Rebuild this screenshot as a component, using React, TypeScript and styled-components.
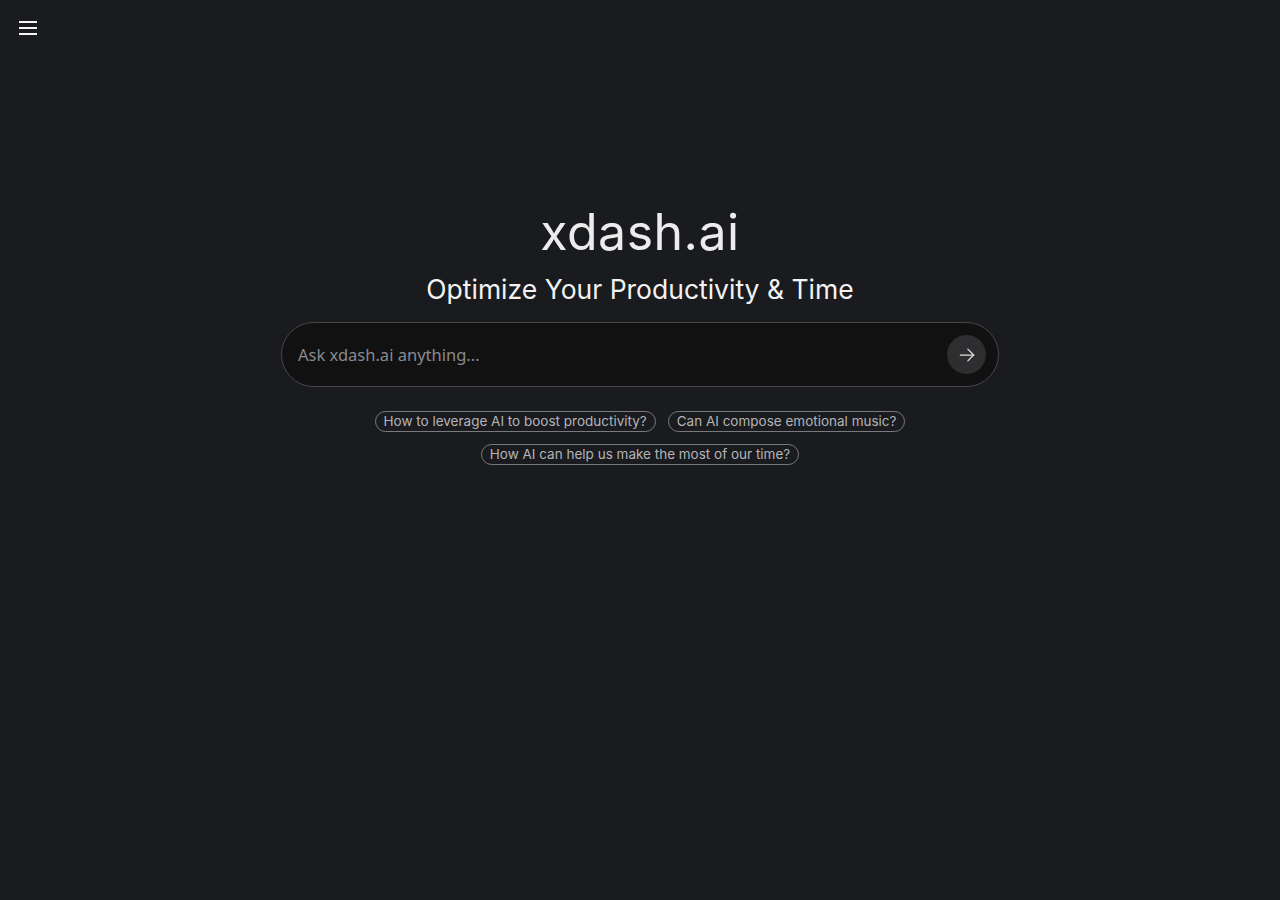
import { useState } from 'react';
import styled, { createGlobalStyle } from 'styled-components';

const GlobalStyle = createGlobalStyle`
  html, body {
    margin: 0;
    padding: 0;
    background: #1a1b1e;
  }
  body {
    font-family: Inter, "Noto Sans", sans-serif;
    color: #ececec;
  }
`;

const Page = styled.div`
  min-height: 900px;
  display: flex;
  flex-direction: column;
`;

const TopBar = styled.header`
  height: 56px;
  display: flex;
  align-items: center;
  padding-left: 16px;
`;

const MenuButton = styled.button`
  width: 24px;
  height: 24px;
  padding: 0;
  border: none;
  background: transparent;
  display: flex;
  align-items: center;
  justify-content: center;
  cursor: pointer;
`;

const Main = styled.main`
  display: flex;
  flex-direction: column;
  align-items: center;
  padding-top: 144px;
`;

const Title = styled.h1`
  margin: 0;
  font-size: 50px;
  font-weight: 400;
  line-height: 64px;
  color: #ececec;
  letter-spacing: 0.5px;
`;

const Subtitle = styled.h2`
  margin: 8px 0 0;
  font-size: 26.5px;
  font-weight: 400;
  line-height: 34px;
  color: #f2f2f2;
`;

const SearchForm = styled.form`
  margin-top: 16px;
  width: 718px;
  height: 65px;
  box-sizing: border-box;
  display: flex;
  align-items: center;
  padding: 0 12px 0 16px;
  background: #111112;
  border: 1px solid #47474b;
  border-radius: 33px;
`;

const SearchInput = styled.input`
  flex: 1;
  background: transparent;
  border: none;
  outline: none;
  padding: 0;
  color: #e6e6e6;
  font-family: "Noto Sans", sans-serif;
  font-size: 16.5px;

  &::placeholder {
    color: #8a8a8e;
  }
`;

const SendButton = styled.button`
  width: 39px;
  height: 39px;
  border-radius: 50%;
  border: none;
  background: #2e2e31;
  display: flex;
  align-items: center;
  justify-content: center;
  padding: 0;
  cursor: pointer;
`;

const Suggestions = styled.div`
  margin-top: 24px;
  display: flex;
  flex-direction: column;
  align-items: center;
  gap: 12px;
`;

const ChipRow = styled.div`
  display: flex;
  gap: 12px;
`;

const Chip = styled.button`
  height: 21px;
  box-sizing: border-box;
  padding: 0 8px;
  border: 1px solid #7a7a7e;
  border-radius: 11px;
  background: transparent;
  color: #b4b4b8;
  font-family: inherit;
  font-size: 13.5px;
  line-height: 19px;
  cursor: pointer;
`;

const rows = [
  ['How to leverage AI to boost productivity?', 'Can AI compose emotional music?'],
  ['How AI can help us make the most of our time?'],
];

const App = () => {
  const [query, setQuery] = useState('');

  return (
    <Page>
      <GlobalStyle />
      <TopBar>
        <MenuButton aria-label="menu">
          <svg width="18" height="14" viewBox="0 0 18 14">
            <rect x="0" y="0" width="18" height="2" fill="#f4f4f4" />
            <rect x="0" y="6" width="18" height="2" fill="#f4f4f4" />
            <rect x="0" y="12" width="18" height="2" fill="#f4f4f4" />
          </svg>
        </MenuButton>
      </TopBar>
      <Main>
        <Title>xdash.ai</Title>
        <Subtitle>Optimize Your Productivity &amp; Time</Subtitle>
        <SearchForm onSubmit={(e) => e.preventDefault()}>
          <SearchInput
            placeholder="Ask xdash.ai anything..."
            value={query}
            onChange={(e) => setQuery(e.target.value)}
          />
          <SendButton type="submit" aria-label="send">
            <svg width="20" height="20" viewBox="0 0 24 24" fill="none" stroke="#e0e0e0" strokeWidth="1.5" strokeLinecap="round" strokeLinejoin="round">
              <path d="M4 12h16" />
              <path d="M13 5l7 7-7 7" />
            </svg>
          </SendButton>
        </SearchForm>
        <Suggestions>
          {rows.map((row, i) => (
            <ChipRow key={i}>
              {row.map((q) => (
                <Chip key={q} onClick={() => setQuery(q)}>{q}</Chip>
              ))}
            </ChipRow>
          ))}
        </Suggestions>
      </Main>
    </Page>
  );
};

export default App;
